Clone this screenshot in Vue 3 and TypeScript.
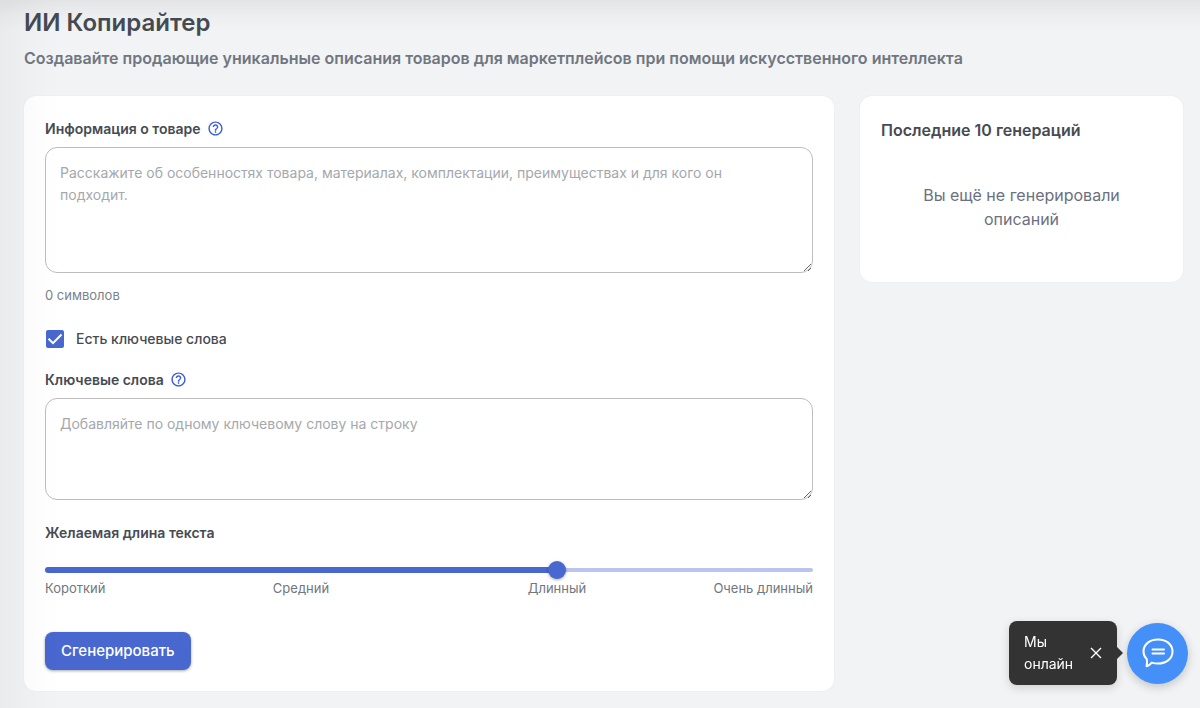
<script setup lang="ts">
import { computed, ref } from 'vue'

const info = ref('')
const keywords = ref('')
const hasKeywords = ref(true)
const length = ref(2)
const showChatHint = ref(true)
const lengths: string[] = ['Короткий', 'Средний', 'Длинный', 'Очень длинный']

const filled = computed(() => `${(length.value / (lengths.length - 1)) * 100}%`)
</script>

<template>
  <div class="page">
    <header class="head">
      <h1>ИИ Копирайтер</h1>
      <p>Создавайте продающие уникальные описания товаров для маркетплейсов при помощи искусственного интеллекта</p>
    </header>

    <main class="columns">
      <form class="card form" @submit.prevent>
        <div class="label-row">
          <label for="info">Информация о товаре</label>
          <button type="button" class="help" aria-label="Подсказка">
            <svg viewBox="0 0 24 24"><path d="M11 18h2v-2h-2v2zm1-16C6.480 2 2 6.480 2 12s4.480 10 10 10 10-4.480 10-10S17.520 2 12 2zm0 18c-4.410 0-8-3.590-8-8s3.590-8 8-8 8 3.590 8 8-3.590 8-8 8zm0-14c-2.210 0-4 1.790-4 4h2c0-1.100.9-2 2-2s2 .9 2 2c0 2-3 1.750-3 5h2c0-2.250 3-2.500 3-5 0-2.210-1.790-4-4-4z" /></svg>
          </button>
        </div>
        <textarea id="info" v-model="info" class="tall" placeholder="Расскажите об особенностях товара, материалах, комплектации, преимуществах и для кого он подходит."></textarea>
        <p class="counter">{{ info.length }} символов</p>

        <label class="check">
          <input v-model="hasKeywords" type="checkbox" />
          <svg viewBox="0 0 18 18"><path d="M2.500 8.800 7 13.200 15.500 4.500" /></svg>
          <span>Есть ключевые слова</span>
        </label>

        <div class="label-row">
          <label for="keywords">Ключевые слова</label>
          <button type="button" class="help" aria-label="Подсказка">
            <svg viewBox="0 0 24 24"><path d="M11 18h2v-2h-2v2zm1-16C6.480 2 2 6.480 2 12s4.480 10 10 10 10-4.480 10-10S17.520 2 12 2zm0 18c-4.410 0-8-3.590-8-8s3.590-8 8-8 8 3.590 8 8-3.590 8-8 8zm0-14c-2.210 0-4 1.790-4 4h2c0-1.100.9-2 2-2s2 .9 2 2c0 2-3 1.750-3 5h2c0-2.250 3-2.500 3-5 0-2.210-1.790-4-4-4z" /></svg>
          </button>
        </div>
        <textarea id="keywords" v-model="keywords" class="short" placeholder="Добавляйте по одному ключевому слову на строку"></textarea>

        <div class="label-row length-label">
          <label for="length">Желаемая длина текста</label>
        </div>
        <div class="slider">
          <div class="track"></div>
          <div class="fill" :style="{ width: filled }"></div>
          <input id="length" v-model.number="length" type="range" min="0" max="3" step="1" />
        </div>
        <div class="ticks">
          <span v-for="name in lengths" :key="name">{{ name }}</span>
        </div>

        <button type="submit" class="submit">Сгенерировать</button>
      </form>

      <aside class="card history">
        <h2>Последние 10 генераций</h2>
        <p>Вы ещё не генерировали описаний</p>
      </aside>
    </main>

    <div class="edge"></div>

    <div class="chat">
      <div v-if="showChatHint" class="hint">
        <span>Мы онлайн</span>
        <button type="button" aria-label="Закрыть" @click="showChatHint = false">
          <svg viewBox="0 0 12 12"><path d="M1 1 11 11M11 1 1 11" /></svg>
        </button>
      </div>
      <button type="button" class="bubble" aria-label="Открыть чат">
        <svg viewBox="0 0 32 30">
          <path d="M16 1.500C24.500 1.500 30.500 6.500 30.500 13.500S24.500 25.500 16 25.500C13.500 25.500 11.500 25.200 9.800 24.600 8.300 26.500 6.500 27.700 4.600 28.300 5 26.300 5.200 23.500 4.800 21.200 2.700 19.200 1.500 16.600 1.500 13.500 1.500 6.500 7.500 1.500 16 1.500Z" />
          <path d="M10.500 11.500H22M10.500 15.500H22" />
        </svg>
      </button>
    </div>
  </div>
</template>

<style>
html,
body {
  margin: 0;
  background: #f2f3f5;
}
</style>

<style scoped>
.page {
  box-sizing: border-box;
  min-height: 100vh;
  padding: 8px 17px 16px 24px;
  font-family: Inter, "Liberation Sans", sans-serif;
  color: #464b53;
}

.page * {
  box-sizing: border-box;
}

h1,
h2,
p {
  margin: 0;
}

h1 {
  font-size: 24px;
  line-height: 30px;
  font-weight: 600;
}

.head p {
  margin-top: 8px;
  font-size: 16px;
  line-height: 24px;
  font-weight: 600;
  color: #707780;
}

.columns {
  display: grid;
  grid-template-columns: minmax(0, 1fr) 323px;
  gap: 26px;
  align-items: start;
  margin-top: 26px;
}

.card {
  padding: 20px 21px 21px;
  border-radius: 12px;
  background: #fff;
  box-shadow: 0 0 2px rgba(0, 0, 0, 0.06);
}

.form {
  display: flex;
  flex-direction: column;
}

.label-row {
  display: flex;
  align-items: center;
  gap: 6px;
  height: 24px;
  margin-bottom: 7px;
  font-size: 14px;
  font-weight: 600;
}

.help {
  display: flex;
  padding: 0;
  border: 0;
  background: none;
}

.help svg {
  width: 17px;
  height: 17px;
  fill: #3a5bd9;
}

textarea {
  width: 100%;
  padding: 14px 24px 14px 14px;
  border: 1px solid #bdbdbd;
  border-radius: 12px;
  background: transparent;
  font: 14px/22px Inter, "Liberation Sans", sans-serif;
  color: #464b53;
  resize: vertical;
}

textarea::placeholder {
  color: #a5a8ad;
}

.tall {
  height: 126px;
}

.short {
  height: 102px;
}

.counter {
  margin-top: 13px;
  font-size: 13px;
  line-height: 18px;
  color: #7b828b;
}

.check {
  display: grid;
  grid-template-columns: 20px 1fr;
  align-items: center;
  column-gap: 11px;
  margin: 25px 0 18px;
  font-size: 14px;
  line-height: 20px;
  font-weight: 500;
}

.check input {
  grid-area: 1 / 1;
  width: 18px;
  height: 18px;
  margin: 0 1px;
  border: 2px solid #4868d0;
  border-radius: 2px;
  appearance: none;
}

.check input:checked {
  background: #4868d0;
}

.check svg {
  grid-area: 1 / 1;
  width: 18px;
  height: 18px;
  margin: 0 1px;
  fill: none;
  stroke: #fff;
  stroke-width: 2;
  pointer-events: none;
}

.length-label {
  margin-top: 20px;
  margin-bottom: 17px;
}

.slider {
  display: grid;
  align-items: center;
  height: 18px;
}

.track,
.fill,
.slider input {
  grid-area: 1 / 1;
}

.track {
  height: 4px;
  border-radius: 2px;
  background: #b9c5ee;
}

.fill {
  height: 6px;
  border-radius: 3px;
  background: #4868d0;
}

.slider input {
  height: 18px;
  margin: 0 -9px;
  background: transparent;
  appearance: none;
}

.slider input::-webkit-slider-thumb {
  width: 18px;
  height: 18px;
  border-radius: 50%;
  background: #4868d0;
  box-shadow: 0 1px 3px rgba(0, 0, 0, 0.35);
  appearance: none;
}

.ticks {
  display: grid;
  grid-template-columns: 1fr 2fr 2fr 1fr;
  font-size: 13px;
  line-height: 18px;
  color: #707780;
  text-align: center;
  white-space: nowrap;
}

.ticks span:first-child {
  text-align: left;
}

.ticks span:last-child {
  justify-self: end;
}

.submit {
  align-self: flex-start;
  height: 38px;
  margin-top: 35px;
  padding: 0 16px;
  border: 0;
  border-radius: 8px;
  background: #4868d0;
  box-shadow: 0 1px 3px rgba(0, 0, 0, 0.35);
  font: 500 15px/20px Inter, "Liberation Sans", sans-serif;
  color: #fff;
}

.history h2 {
  margin-top: 2px;
  font-size: 16px;
  line-height: 24px;
  font-weight: 600;
}

.history p {
  padding: 41px 32px 30px;
  font-size: 16px;
  line-height: 24px;
  color: #6c7080;
  text-align: center;
}

.edge {
  position: fixed;
  inset: 0;
  background:
    linear-gradient(to bottom, rgba(0, 0, 0, 0.06), rgba(0, 0, 0, 0.02) 16px, transparent 32px),
    linear-gradient(to right, rgba(0, 0, 0, 0.03), rgba(0, 0, 0, 0.01) 30px, transparent 60px);
  pointer-events: none;
}

.chat {
  position: fixed;
  right: 12px;
  bottom: 23px;
  display: flex;
  align-items: center;
  gap: 10px;
}

.hint {
  position: relative;
  display: flex;
  align-items: center;
  justify-content: space-between;
  width: 108px;
  padding: 10px 15px;
  border-radius: 8px;
  background: #333;
  box-shadow: 0 3px 10px rgba(0, 0, 0, 0.15);
  font-size: 14px;
  line-height: 22px;
  color: #fff;
}

.hint::after {
  position: absolute;
  top: 50%;
  left: 100%;
  border: 6px solid transparent;
  border-left-color: #333;
  content: "";
  transform: translateY(-50%);
}

.hint span {
  width: min-content;
}

.hint button {
  display: flex;
  padding: 0;
  border: 0;
  background: none;
}

.hint svg {
  width: 12px;
  height: 12px;
  fill: none;
  stroke: #fff;
  stroke-width: 1.4;
}

.bubble {
  display: grid;
  place-items: center;
  width: 61px;
  height: 61px;
  padding: 0;
  border: 0;
  border-radius: 50%;
  background: #448ff8;
  box-shadow: 0 3px 10px rgba(0, 0, 0, 0.2);
}

.bubble svg {
  width: 32px;
  height: 30px;
  fill: none;
  stroke: #fff;
  stroke-width: 2;
  stroke-linejoin: round;
  stroke-linecap: round;
}
</style>
